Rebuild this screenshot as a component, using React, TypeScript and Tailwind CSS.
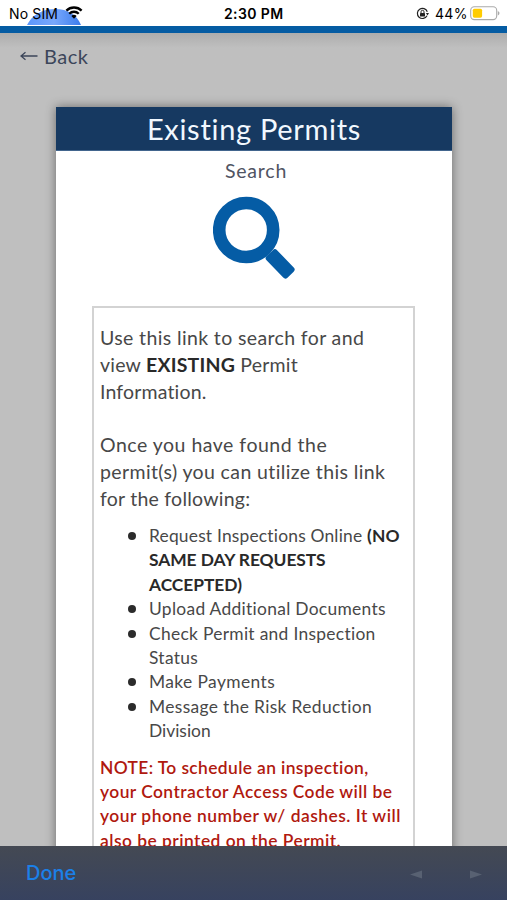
import type { ReactNode } from "react";

interface LineProps {
  className?: string,
  children: ReactNode,
}

function Line({ className = "", children }: LineProps) {
  return <span className={`block w-fit whitespace-nowrap ${className}`}>{children}</span>
}

function StatusBar() {
  return (
    <header className="relative h-[26px] shrink-0 bg-white font-['Inter','Liberation_Sans',sans-serif] text-black">
      <svg className="absolute left-[26px] top-[9px]" width="57" height="17" viewBox="0 0 57 17">
        <defs>
          <linearGradient id="dome" x1="0" x2="1">
            <stop offset="0" stopColor="#5b97fb" />
            <stop offset="0.5" stopColor="#78a8fc" />
            <stop offset="1" stopColor="#3c7cec" />
          </linearGradient>
        </defs>
        <path d="M1 16C6 6 16 0 29 0s22 6 26 16z" fill="url(#dome)" />
      </svg>
      <div className="relative flex h-full items-center pt-[1px] text-[14px]">
        <span className="ml-[9px] w-[49px] whitespace-nowrap text-[14px] tracking-[0.15px]">No SIM</span>
        <svg className="ml-[7px] -mt-[2px]" width="18" height="13" viewBox="0 0 19 14" fill="none" stroke="#000" strokeWidth="2.5">
          <path d="M1.3 4.9a11.8 11.8 0 0 1 16.4 0" />
          <path d="M4.4 8.3a7.3 7.3 0 0 1 10.2 0" />
          <path d="M6.7 10.9a4 4 0 0 1 5.6 0L9.5 13.7z" fill="#000" stroke="none" />
        </svg>
        <span className="ml-[141px] w-[60px] whitespace-nowrap text-[14px] font-semibold tracking-[0.4px]">2:30 PM</span>
        <svg className="ml-[132px]" width="13" height="13" viewBox="0 0 13 13" fill="none" stroke="#222">
          <path d="M11 8.8A5.1 5.1 0 1 1 11.3 4.7" strokeWidth="1.2" />
          <path d="M9.9 6h3.1l-1.5 2.6z" fill="#222" stroke="none" />
          <rect x="4" y="5.9" width="5" height="3.6" rx=".6" fill="#222" stroke="none" />
          <path d="M5 6V4.8a1.5 1.5 0 0 1 3 0V6" strokeWidth="1" />
        </svg>
        <span className="ml-[6px] w-[33px] whitespace-nowrap text-[14px] tracking-[0.3px]">44%</span>
        <svg className="ml-[2px] -mt-[1px]" width="31" height="15" viewBox="0 0 31 15">
          <rect x=".7" y=".8" width="26" height="12.8" rx="3.6" fill="none" stroke="#aaa" strokeWidth="1.1" />
          <rect x="2.8" y="2.7" width="9.3" height="9" rx="1.6" fill="#fc0" />
          <path d="M27.8 5v4.4c2.2-.8 2.2-3.6 0-4.4z" fill="#aaa" />
        </svg>
      </div>
    </header>
  )
}

function SearchIcon() {
  return (
    <svg className="ml-[157px] block" width="84" height="84" viewBox="0 0 84 84">
      <circle cx="33.2" cy="34" r="27" fill="none" stroke="#055ca5" strokeWidth="12.6" />
      <rect x="-4" y="-7.3" width="30" height="14.6" rx="3" fill="#055ca5" transform="translate(59.5 60) rotate(46)" />
    </svg>
  )
}

function Bullet({ children }: { children: ReactNode }) {
  return (
    <li className="flex">
      <span className="ml-[28px] mr-[13px] mt-[8px] size-[8px] shrink-0 rounded-full bg-[#2b2b2b]" />
      <div>{children}</div>
    </li>
  )
}

function Instructions() {
  return (
    <section className="ml-[36px] mt-[26px] w-[323px] border-2 border-[#d3d3d3] pb-8 pl-[6px] pt-[16px] text-[#484848]">
      <p className="text-[19.5px] leading-[27px]">
        <Line className="tracking-[0.37px]">Use this link to search for and</Line>
        <Line className="tracking-[0.22px]">view <b className="text-[#292929]">EXISTING</b> Permit</Line>
        <Line className="tracking-[0.16px]">Information.</Line>
      </p>
      <p className="mt-[26px] text-[19.5px] leading-[27px]">
        <Line className="tracking-[0.5px]">Once you have found the</Line>
        <Line className="tracking-[0.38px]">permit(s) you can utilize this link</Line>
        <Line className="tracking-[0.24px]">for the following:</Line>
      </p>
      <ul className="mt-[12px] text-[17.4px] leading-[24.4px]">
        <Bullet>
          <Line className="tracking-[0.2px]">Request Inspections Online <b className="text-[#292929]">(NO</b></Line>
          <Line className="tracking-[-0.07px] font-bold text-[#292929]">SAME DAY REQUESTS</Line>
          <Line className="tracking-[-0.05px] font-bold text-[#292929]">ACCEPTED)</Line>
        </Bullet>
        <Bullet><Line className="tracking-[0.3px]">Upload Additional Documents</Line></Bullet>
        <Bullet>
          <Line className="tracking-[0.3px]">Check Permit and Inspection</Line>
          <Line className="tracking-[0.3px]">Status</Line>
        </Bullet>
        <Bullet><Line className="tracking-[0.4px]">Make Payments</Line></Bullet>
        <Bullet>
          <Line className="tracking-[0.35px]">Message the Risk Reduction</Line>
          <Line>Division</Line>
        </Bullet>
      </ul>
      <p className="mt-[12px] text-[17.4px] font-semibold leading-[24.4px] text-[#b0190f]">
        <Line className="tracking-[0.38px]">NOTE: To schedule an inspection,</Line>
        <Line className="tracking-[0.45px]">your Contractor Access Code will be</Line>
        <Line className="tracking-[0.49px]">your phone number w/ dashes. It will</Line>
        <Line className="tracking-[0.48px]">also be printed on the Permit.</Line>
      </p>
    </section>
  )
}

export default function App() {
  return (
    <div className="flex h-[900px] w-[507px] flex-col overflow-hidden bg-[#bfbfbf] font-['Lato','Liberation_Sans',sans-serif]">
      <StatusBar />
      <div className="h-[7px] shrink-0 bg-[#055ca3]" />
      <main className="min-h-0 flex-1 overflow-hidden">
        <div className="h-[74px] bg-linear-to-b from-[#adadad] via-[#bfbfbf] via-20% to-[#bfbfbf] pt-[10px]">
          <button className="ml-[20px] flex h-[26px] items-center text-[20px] text-[#3c465a]">
            <svg width="18" height="12" viewBox="0 0 18 12" fill="none" stroke="#3c465a" strokeWidth="1.3">
              <path d="M.8 6H17.5M5.5 2.3L1 6l4.5 3.7" />
            </svg>
            <span className="ml-[6px] tracking-[0.5px]">Back</span>
          </button>
        </div>
        <div className="ml-[56px] w-[396px] bg-white shadow-[0_0_10px_rgba(0,0,0,0.45)]">
          <h1 className="flex h-[44px] items-center justify-center border-b border-[#42658d] bg-[#163961] text-[29px] text-[#f1f8ff]">
            <span className="whitespace-nowrap tracking-[0.7px]">Existing Permits</span>
          </h1>
          <h2 className="h-[45px] pl-[4px] pt-[6px] text-center text-[19.5px] leading-[27px] text-[#505463]">
            <span className="tracking-[0.8px]">Search</span>
          </h2>
          <SearchIcon />
          <Instructions />
        </div>
      </main>
      <footer className="flex h-[54px] shrink-0 items-center bg-linear-to-b from-[#444953] to-[#37425f] font-['Inter','Liberation_Sans',sans-serif]">
        <button className="ml-[26px] text-[20px] font-medium text-[#1b80e8]">Done</button>
        <svg className="ml-auto mr-[25px] mt-[3px]" width="72" height="9" viewBox="0 0 72 9" fill="#586172">
          <path d="M12 .5v8L0 4.5zM60 .5v8l12-4z" />
        </svg>
      </footer>
    </div>
  )
}
